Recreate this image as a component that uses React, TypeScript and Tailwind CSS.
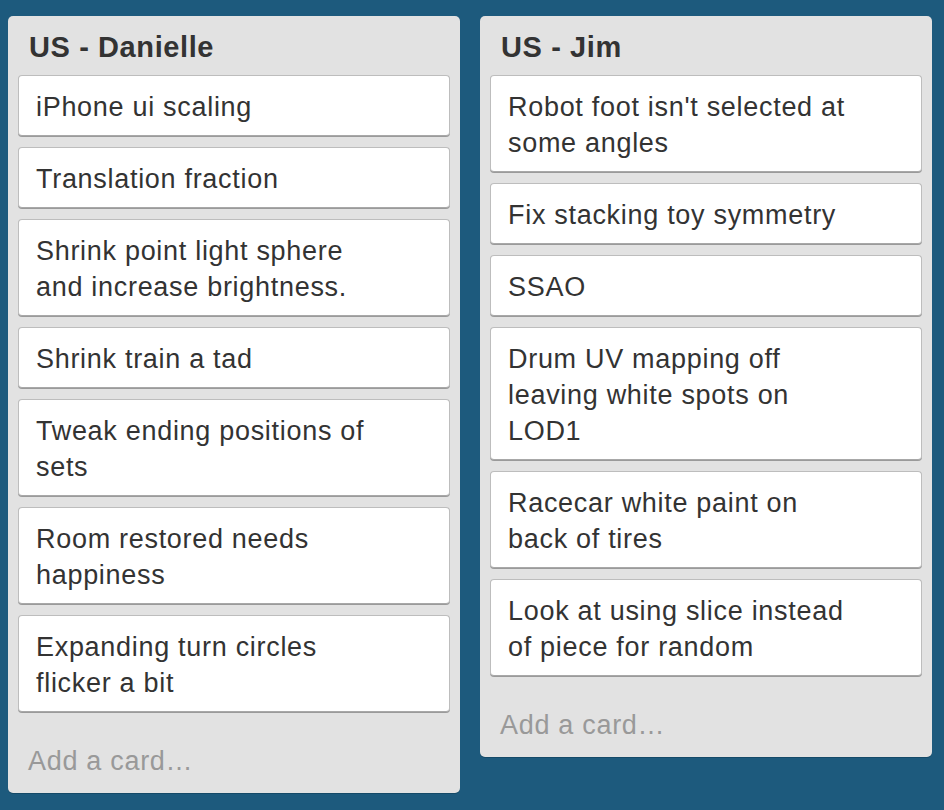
const lists = [
  {
    title: "US - Danielle",
    cards: [
      ["iPhone ui scaling"],
      ["Translation fraction"],
      ["Shrink point light sphere", "and increase brightness."],
      ["Shrink train a tad"],
      ["Tweak ending positions of", "sets"],
      ["Room restored needs", "happiness"],
      ["Expanding turn circles", "flicker a bit"],
    ],
  },
  {
    title: "US - Jim",
    cards: [
      ["Robot foot isn't selected at", "some angles"],
      ["Fix stacking toy symmetry"],
      ["SSAO"],
      ["Drum UV mapping off", "leaving white spots on", "LOD1"],
      ["Racecar white paint on", "back of tires"],
      ["Look at using slice instead", "of piece for random"],
    ],
  },
];

function Card({ lines }: { lines: string[] }) {
  return (
    <div className="mb-[11px] rounded-[4px] border border-[#bdbdbd] border-b-[#a8a8a8] bg-white pl-[17px] pr-[20px] pt-[13px] pb-[10px] shadow-[0_1px_0_#9a9a9a]">
      {lines.map((line, i) => (
        <div key={i} className="whitespace-nowrap text-[27px] leading-[36px] tracking-[0.7px] text-[#333333]">
          {line}
        </div>
      ))}
    </div>
  );
}

function List({ title, cards }: { title: string; cards: string[][] }) {
  return (
    <div className="w-[452px] shrink-0 rounded-[5px] bg-[#e2e2e2] px-[10px] pt-[13px] pb-[14px] shadow-[0_1px_0_#154a68]">
      <h2 className="mb-[10px] px-[11px] text-[29px] font-bold leading-[36px] tracking-[0.6px] text-[#333333]">{title}</h2>
      {cards.map((lines, i) => (
        <Card key={i} lines={lines} />
      ))}
      <div className="mt-[31px] pl-[10px] text-[27px] leading-[36px] tracking-[0.7px] text-[#999999]">Add a card…</div>
    </div>
  );
}

export default function App() {
  return (
    <div
      className="flex min-h-[810px] items-start gap-[20px] bg-[#1d5a7d] pl-[8px] pt-[16px]"
      style={{ fontFamily: '"Liberation Sans", Arial, sans-serif' }}
    >
      {lists.map((l) => (
        <List key={l.title} title={l.title} cards={l.cards} />
      ))}
    </div>
  );
}
